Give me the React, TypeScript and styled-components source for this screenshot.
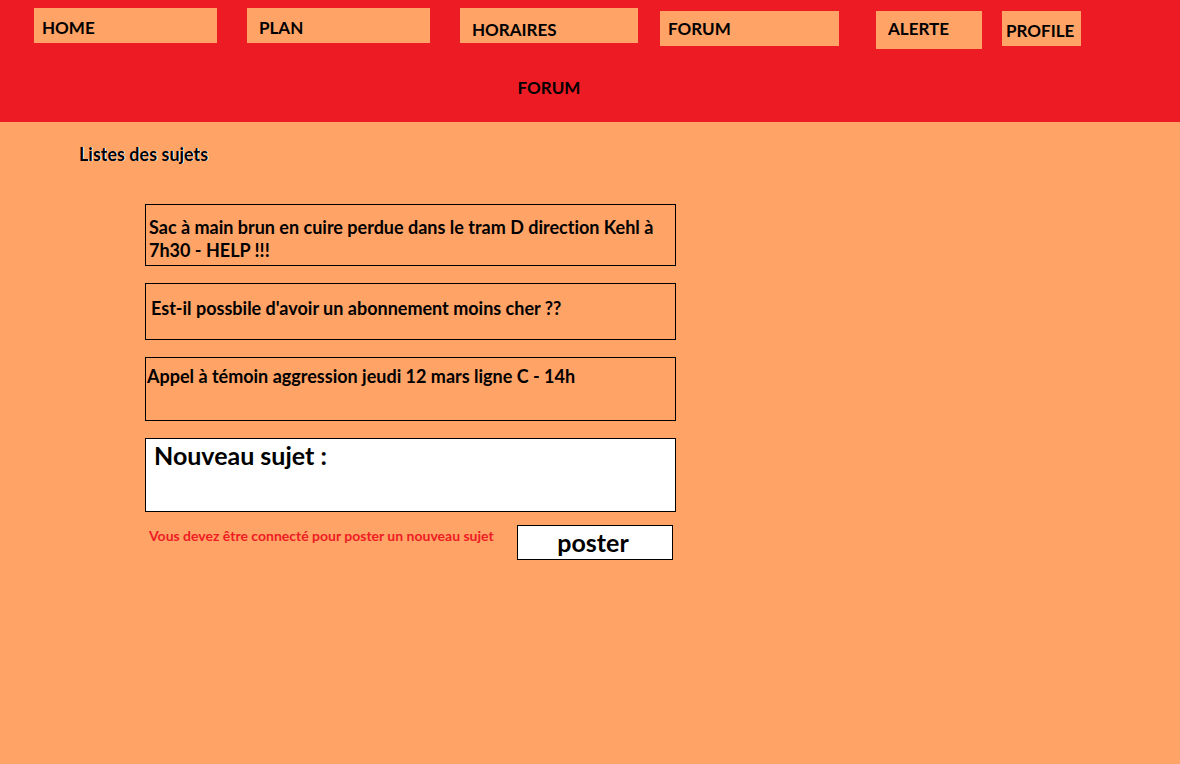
import React from 'react';
import styled, { createGlobalStyle } from 'styled-components';

const RED = '#ed1c24';
const PEACH = '#ffa366';

const GlobalStyle = createGlobalStyle`
  *, *::before, *::after { box-sizing: border-box; }
  body {
    margin: 0;
    background: ${PEACH};
    color: #000;
    font-family: Lato, "Open Sans", sans-serif;
    font-weight: 700;
    font-size: 18px;
    line-height: 23px;
    font-variant-ligatures: none;
  }
`;

const Header = styled.header`
  min-height: 122px;
  background: ${RED};
`;

const Nav = styled.nav`
  display: flex;
  gap: 22px;
  height: 76px;
  padding: 8px 99px 0 34px;
  font-size: 17px;
`;

const NavGroup = styled.div<{ $size: number; $gap: number; $top?: number }>`
  display: flex;
  align-items: flex-start;
  flex: ${(p) => p.$size} 1 ${(p) => p.$size}px;
  gap: ${(p) => p.$gap}px;
  padding-top: ${(p) => p.$top ?? 0}px;
`;

const NavLink = styled.a<{ $size: number; $inset: number; $top?: number; $height?: number }>`
  flex: ${(p) => p.$size} 1 ${(p) => p.$size}px;
  min-width: 0;
  height: ${(p) => p.$height ?? 35}px;
  padding: ${(p) => p.$top ?? 8}px 0 0 ${(p) => p.$inset}px;
  background: ${PEACH};
  color: inherit;
  text-decoration: none;
`;

const PageTitle = styled.h1`
  margin: 0;
  padding-right: 82px;
  font-size: 17px;
  line-height: 23px;
  text-align: center;
`;

const Main = styled.main`
  padding: 21px 0 40px 145px;
`;

const ListTitle = styled.h2`
  margin: 0 0 38px -66px;
  font-size: 18px;
  line-height: 23px;
  text-shadow: 1px 0 0 #fff;
`;

const Column = styled.div`
  width: 531px;
  max-width: calc(100% - 16px);
`;

const TopicList = styled.ul`
  display: grid;
  gap: 17px;
  margin: 0 0 17px;
  padding: 0;
  list-style: none;
`;

const Topic = styled.li<{ $height: number; $top: number; $inset: number }>`
  min-height: ${(p) => p.$height}px;
  padding: ${(p) => p.$top}px 4px 3px ${(p) => p.$inset}px;
  border: 1px solid #000;
`;

const Field = styled.div`
  display: flex;
  flex-direction: column;
  height: 74px;
  padding: 0 8px;
  border: 1px solid #000;
  background: #fff;
`;

const FieldLabel = styled.label`
  font-size: 25px;
  line-height: 33px;
`;

const FieldText = styled.textarea`
  flex: 1;
  min-height: 0;
  padding: 0;
  border: 0;
  outline: 0;
  resize: none;
  background: transparent;
  font: inherit;
`;

const FormFooter = styled.div`
  display: flex;
  justify-content: space-between;
  gap: 16px;
  padding: 13px 3px 0 4px;
`;

const Notice = styled.p`
  margin: 0;
  color: ${RED};
  font-size: 14px;
  line-height: 22px;
`;

const PostButton = styled.button`
  width: 156px;
  height: 35px;
  padding: 0 4px 0 0;
  border: 1px solid #000;
  background: #fff;
  color: #000;
  font: inherit;
  font-size: 25px;
  line-height: 33px;
  cursor: pointer;
`;

const topics = [
  { text: 'Sac à main brun en cuire perdue dans le tram D direction Kehl à 7h30 - HELP !!!', height: 62, top: 11, inset: 3 },
  { text: "Est-il possbile d'avoir un abonnement moins cher ??", height: 57, top: 13, inset: 5 },
  { text: 'Appel à témoin aggression jeudi 12 mars ligne C - 14h', height: 64, top: 7, inset: 1 },
];

export default function App() {
  return (
    <>
      <GlobalStyle />
      <Header>
        <Nav>
          <NavGroup $size={604} $gap={30}>
            <NavLink href="#home" $size={183} $inset={8}>HOME</NavLink>
            <NavLink href="#plan" $size={183} $inset={12}>PLAN</NavLink>
            <NavLink href="#horaires" $size={178} $inset={12} $top={10}>HORAIRES</NavLink>
          </NavGroup>
          <NavGroup $size={421} $gap={37} $top={3}>
            <NavLink href="#forum" $size={179} $inset={8} $top={6}>FORUM</NavLink>
            <NavGroup $size={205} $gap={20}>
              <NavLink href="#alerte" $size={106} $inset={12} $top={6} $height={38}>ALERTE</NavLink>
              <NavLink href="#profile" $size={79} $inset={4}>PROFILE</NavLink>
            </NavGroup>
          </NavGroup>
        </Nav>
        <PageTitle>FORUM</PageTitle>
      </Header>
      <Main>
        <ListTitle>Listes des sujets</ListTitle>
        <Column>
          <TopicList>
            {topics.map((t) => (
              <Topic key={t.text} $height={t.height} $top={t.top} $inset={t.inset}>
                {t.text}
              </Topic>
            ))}
          </TopicList>
          <form onSubmit={(e) => e.preventDefault()}>
            <Field>
              <FieldLabel htmlFor="sujet">Nouveau sujet :</FieldLabel>
              <FieldText id="sujet" />
            </Field>
            <FormFooter>
              <Notice>Vous devez être connecté pour poster un nouveau sujet</Notice>
              <PostButton type="submit">poster</PostButton>
            </FormFooter>
          </form>
        </Column>
      </Main>
    </>
  );
}
